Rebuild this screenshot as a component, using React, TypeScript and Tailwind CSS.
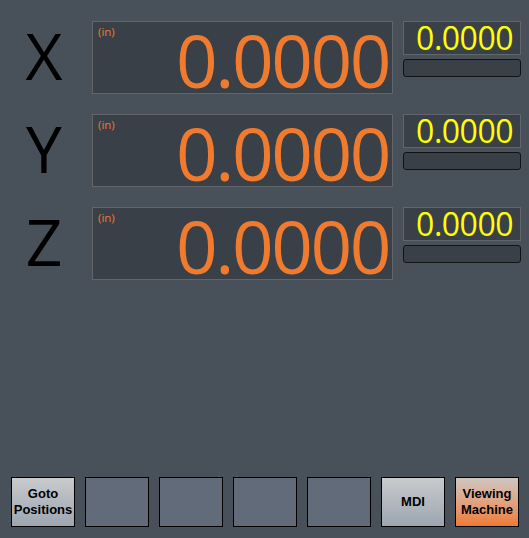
import React from "react";

const axes = ["X", "Y", "Z"];

function AxisRow({ axis }: { axis: string }) {
  return (
    <div className="flex items-start">
      {/* Axis letter */}
      <div className="w-[92px] h-[73px] flex items-center justify-center pr-[4px] pb-[4px]">
        <span className="text-[64px] leading-none text-black font-['Open_Sans',sans-serif]">{axis}</span>
      </div>

      {/* Main DRO readout */}
      <div className="relative w-[301px] h-[73px] bg-[#3a4048] border border-[#62666b] flex items-center justify-end pr-[3px]">
        <span className="absolute left-[5px] top-[1px] text-[11.5px] text-[#ec7930] font-['Open_Sans',sans-serif]">(in)</span>
        <span className="text-[73px] leading-none tracking-[-2.5px] text-[#f07b2e] font-['Open_Sans',sans-serif] mt-[3px]">
          0.0000
        </span>
      </div>

      {/* Secondary readout and bar */}
      <div className="ml-[10px] flex flex-col gap-[4px]">
        <div className="w-[118px] h-[34px] bg-[#3a4048] border border-[#62666b] flex items-center justify-end pr-[7px]">
          <span className="text-[32px] leading-none tracking-[-0.5px] text-[#ffff00] font-['Open_Sans',sans-serif]">0.0000</span>
        </div>
        <div className="w-[118px] h-[18px] rounded-[3px] bg-[#3a4048] border border-[#111315]" />
      </div>
    </div>
  );
}

function PanelButton({ kind, children }: { kind: "grey" | "blank" | "orange"; children?: React.ReactNode }) {
  const fill =
    kind === "grey"
      ? "bg-gradient-to-b from-[#c9cacc] to-[#9ca6b1]"
      : kind === "orange"
      ? "bg-gradient-to-b from-[#cdc6c2] to-[#ee7a30]"
      : "bg-[#626b7a]";
  return (
    <div
      className={`w-[64px] h-[50px] border border-black flex items-center justify-center text-center text-[13px] leading-[16px] font-bold text-black font-['Liberation_Sans',Arial,sans-serif] ${fill}`}
    >
      {children}
    </div>
  );
}

export default function App() {
  return (
    <div className="w-[529px] h-[538px] bg-[#48505a] flex flex-col overflow-hidden">
      <div className="pt-[21px] flex flex-col gap-[20px]">
        {axes.map((a) => (
          <AxisRow key={a} axis={a} />
        ))}
      </div>

      <div className="mt-auto pl-[11px] pb-[11px] flex gap-[10px]">
        <PanelButton kind="grey">
          Goto
          <br />
          Positions
        </PanelButton>
        <PanelButton kind="blank" />
        <PanelButton kind="blank" />
        <PanelButton kind="blank" />
        <PanelButton kind="blank" />
        <PanelButton kind="grey">MDI</PanelButton>
        <PanelButton kind="orange">
          Viewing
          <br />
          Machine
        </PanelButton>
      </div>
    </div>
  );
}
